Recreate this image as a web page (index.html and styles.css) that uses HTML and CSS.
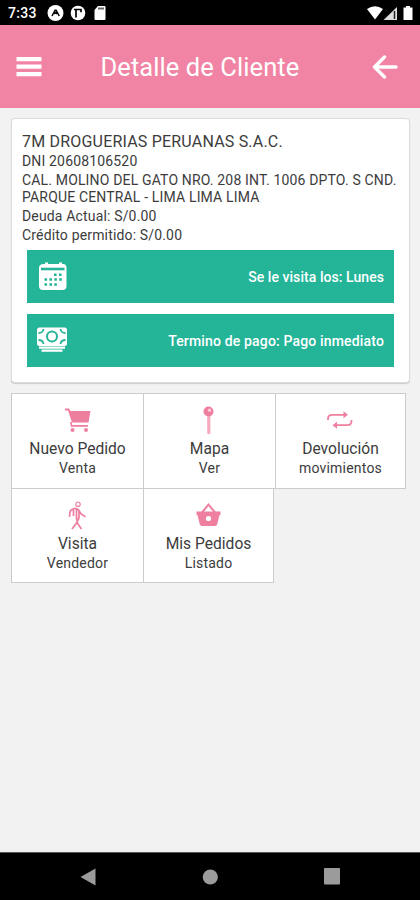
FILE: index.html
```
<!DOCTYPE html>
<html lang="es">
<head>
<meta charset="utf-8">
<title>Detalle de Cliente</title>
<link rel="stylesheet" href="styles.css">
</head>
<body>
<div class="status">
  <span class="clock">7:33</span>
  <svg class="status-left" width="62" height="18" viewBox="0 0 62 18">
    <circle cx="8.500" cy="9" r="8" fill="#fff"/>
    <path d="M5 12 8.100 6.200h1L12.300 12M7.300 10l1.300-1.400L10.100 10" fill="none" stroke="#000" stroke-width="1.500"/>
    <circle cx="31" cy="9" r="7.300" fill="#fff"/>
    <path d="M29 13.500V5.500M27 5.500h7v2.800" fill="none" stroke="#000" stroke-width="1.700"/>
    <path d="M51 2h6.500q1 0 1 1v12q0 1-1 1h-9q-1 0-1-1V6z" fill="#fff"/>
    <path d="M51 4.500h6" stroke="#666" stroke-width="2"/>
  </svg>
  <svg class="status-right" width="48" height="18" viewBox="0 0 48 18">
    <path d="M0 5Q8-.5 16 5L8 15.500z" fill="#fff"/>
    <path d="M16.500 16 30 3v13z" fill="#ddd"/>
    <path d="M27.500 7v8" stroke="#222" stroke-width="1.500"/>
    <path d="M39 2h4v1.500h2.500V16h-9V3.500H39z" fill="#fff"/>
  </svg>
</div>
<header class="header">
  <svg width="26" height="22" viewBox="0 0 26 22"><path d="M.5 3.200h25M.5 10.700h25M.5 18.200h25" stroke="#fff" stroke-width="4.200"/></svg>
  <h1>Detalle de Cliente</h1>
  <svg width="26" height="24" viewBox="0 0 26 24"><path d="M12.500 2 2.500 12l10 10M3 12h21" fill="none" stroke="#fff" stroke-width="3.400" stroke-linecap="round" stroke-linejoin="round"/></svg>
</header>
<main>
  <section class="card">
    <h2>7M DROGUERIAS PERUANAS S.A.C.</h2>
    <p class="dni">DNI 20608106520</p>
    <p class="address">CAL. MOLINO DEL GATO NRO. 208 INT. 1006 DPTO. S CND.<br>PARQUE CENTRAL - LIMA LIMA LIMA</p>
    <p class="debt">Deuda Actual: S/0.00</p>
    <p class="credit">Crédito permitido: S/0.00</p>
    <div class="bar">
      <svg width="32" height="32" viewBox="0 0 32 32">
        <path d="M8 3h1V1.500h3V3h11V1.500h3V3h1q3.500 0 3.500 4v18q0 4-4 4H7q-4 0-4-4V7q0-4 5-4z" fill="#fff"/>
        <path d="M5 8h23.500" stroke="#24b599" stroke-width="2.600"/>
        <path d="M18 13.800h8M8.500 18.500h17.500M8.500 23.500h13" stroke="#24b599" stroke-width="2.600" stroke-dasharray="2.600 2.300"/>
      </svg>
      <span class="visit">Se le visita los: Lunes</span>
    </div>
    <div class="bar">
      <svg width="32" height="32" viewBox="0 0 32 32">
        <rect x="1" y="2.500" width="30" height="18.500" rx="2.500" fill="#fff"/>
        <circle cx="16" cy="11.500" r="5" fill="none" stroke="#24b599" stroke-width="2"/>
        <path d="M2.500 8Q7 8 7.500 4M29.500 8Q25 8 24.500 4M2.500 15Q7 15 7.500 19M29.500 15Q25 15 24.500 19" fill="none" stroke="#24b599" stroke-width="1.800"/>
        <path d="M3 22.600h26M5.500 25.600h21" stroke="#fff" stroke-width="2.400"/>
      </svg>
      <span class="payment">Termino de pago: Pago inmediato</span>
    </div>
  </section>
  <section class="tiles">
    <div class="tile">
      <svg width="28" height="30" viewBox="0 0 28 30"><path d="M1 2.500h4l1.500 2.500h20l-2 11.500H8L4 4.500H1z" fill="#ef7f9f"/><path d="m7 16 .5 3.800H24" fill="none" stroke="#ef7f9f" stroke-width="1.700"/><circle cx="8.500" cy="24" r="2" fill="#ef7f9f"/><circle cx="22" cy="24" r="2" fill="#ef7f9f"/></svg>
      <b>Nuevo Pedido</b><span>Venta</span>
    </div>
    <div class="tile">
      <svg width="28" height="30" viewBox="0 0 28 30"><path d="M11.200 9h3.200v18.500q-1.600 1.500-3.200 0z" fill="#f7a9bf"/><circle cx="12.500" cy="5.500" r="5" fill="#ef7f9f"/><circle cx="13.500" cy="4.200" r="1.600" fill="#fbd3de"/></svg>
      <b>Mapa</b><span>Ver</span>
    </div>
    <div class="tile">
      <svg width="28" height="30" viewBox="0 0 28 30"><path d="M1 14v-1q0-4.200 4.200-4.200H19M24.500 14v1q0 4.200-4.200 4.200H7" fill="none" stroke="#ef7f9f" stroke-width="1.800"/><path d="m16.500 5.300 4.500 3.500-4.500 3.500zM10 15.700l-4.500 3.500 4.500 3.500z" fill="#ef7f9f"/></svg>
      <b>Devolución</b><span>movimientos</span>
    </div>
    <div class="tile">
      <svg width="28" height="30" viewBox="0 0 28 30"><g fill="none" stroke="#ef7f9f" stroke-width="1.700"><circle cx="14" cy="3.200" r="2.200" stroke-width="1.200"/><path d="M11.500 7.300q-5 1-5.500 3.500L5.500 16M11.500 7.300q2 0 3.500 2.200l2 3.500 4.500 2.700M9.500 9v6M12.500 8v9l1 5.500 4 5.500M15 9.500v7.500l-2.500 5-4.500 6"/></g></svg>
      <b>Visita</b><span>Vendedor</span>
    </div>
    <div class="tile">
      <svg width="28" height="30" viewBox="0 0 28 30"><path d="M1.500 10.500h24v3.500h-1l-2.200 9q-.5 2-2.300 2H7q-1.800 0-2.300-2L2.500 14h-1z" fill="#ef7f9f"/><path d="m7 11.500 6.500-8 6.500 8" fill="none" stroke="#ef7f9f" stroke-width="2"/><circle cx="13.500" cy="17.500" r="2.600" fill="#fff"/></svg>
      <b>Mis Pedidos</b><span>Listado</span>
    </div>
  </section>
</main>
<nav class="nav">
  <svg width="16" height="18" viewBox="0 0 16 18"><path d="M.5 9 15.500 .5v17z"/></svg>
  <svg width="16" height="16" viewBox="0 0 16 16"><circle cx="8.300" cy="8" r="7.600"/></svg>
  <svg width="16" height="17" viewBox="0 0 16 17"><rect width="16" height="16.500" rx="1"/></svg>
</nav>
</body>
</html>
```
FILE: styles.css
```
* { box-sizing: border-box; }
body {
  margin: 0;
  height: 900px;
  display: flex;
  flex-direction: column;
  overflow: hidden;
  background: #f2f2f2;
  color: #3c3c3c;
  font-family: Roboto, "Liberation Sans", sans-serif;
}
svg { display: block; flex: none; }
h1, h2, p { margin: 0; font-weight: 400; white-space: nowrap; }
.status {
  height: 25px;
  flex: none;
  display: flex;
  align-items: center;
  padding: 1px 5px 0 8px;
  background: #000;
  color: #fff;
}
.clock { width: 39px; font-size: 14px; font-weight: 500; letter-spacing: .3px; }
.status-right { margin-left: auto; }
.header {
  height: 82.5px;
  flex: none;
  display: flex;
  align-items: center;
  padding: 1px 22px 0 16px;
  background: #f184a4;
  color: #fff;
}
.header h1 {
  flex: 1;
  padding-left: 58.5px;
  font-size: 25.5px;
  line-height: 32px;
  letter-spacing: .08px;
}
main { flex: 1; padding: 10.5px 10px 0 11px; }
.card {
  height: 265px;
  padding: 13px 15px 0 10px;
  background: #fff;
  border: 1px solid #dcdcdc;
  border-radius: 4px;
  box-shadow: 0 1px 1px #ccc;
}
.card h2 { font-size: 16px; line-height: 20px; letter-spacing: .2px; }
.card p { font-size: 14px; line-height: 17px; letter-spacing: .16px; }
.card .dni { line-height: 19px; }
.card .address { margin-top: 1px; }
.card .debt { margin-top: 2px; }
.card .credit { margin-top: 2px; }
.bar {
  height: 53px;
  margin: 6px 0 0 5px;
  padding: 0 10px 0 9px;
  display: flex;
  align-items: center;
  justify-content: space-between;
  background: #24b599;
  color: #fff;
  font-size: 14px;
  font-weight: 500;
  white-space: nowrap;
}
.visit { letter-spacing: .06px; }
.payment { letter-spacing: .16px; }
.bar + .bar { margin-top: 11px; }
.tiles {
  display: grid;
  grid-template-columns: 132px 132px 131px;
  grid-auto-rows: 94.5px;
  margin-top: 10px;
}
.tile {
  display: flex;
  flex-direction: column;
  align-items: center;
  padding-top: 12px;
  background: #fff;
  border: 1px solid #ccc;
  margin: 0 -1px -1px 0;
}
.tile:nth-child(3) { margin-right: 0; }
.tile:nth-child(5) { margin-right: 1px; }
.tile b { font-size: 15.6px; font-weight: 400; line-height: 20px; margin-top: 3px; white-space: nowrap; }
.tile span { font-size: 14px; line-height: 19px; letter-spacing: .2px; }
.nav {
  height: 48px;
  flex: none;
  display: flex;
  align-items: center;
  justify-content: space-between;
  padding: 0 80px;
  background: #000;
  border-top: 1px solid #555;
  fill: #9b9b9b;
}
```
